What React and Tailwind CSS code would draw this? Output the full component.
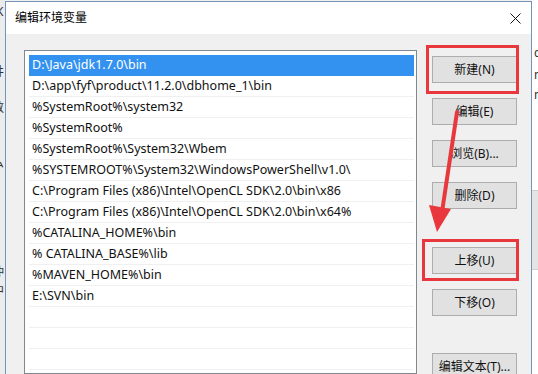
import React from 'react';

const paths = [
  'D:\\Java\\jdk1.7.0\\bin',
  'D:\\app\\fyf\\product\\11.2.0\\dbhome_1\\bin',
  '%SystemRoot%\\system32',
  '%SystemRoot%',
  '%SystemRoot%\\System32\\Wbem',
  '%SYSTEMROOT%\\System32\\WindowsPowerShell\\v1.0\\',
  'C:\\Program Files (x86)\\Intel\\OpenCL SDK\\2.0\\bin\\x86',
  'C:\\Program Files (x86)\\Intel\\OpenCL SDK\\2.0\\bin\\x64%',
  '%CATALINA_HOME%\\bin',
  '% CATALINA_BASE%\\lib',
  '%MAVEN_HOME%\\bin',
  'E:\\SVN\\bin',
  '', '', '', '',
];

const Btn = ({ children, className = '' }) => (
  <div
    className={`w-[85px] h-[27px] shrink-0 bg-[#e1e1e1] border border-[#adadad] flex items-center justify-center text-[12px] text-[#111] ${className}`}
  >
    {children}
  </div>
);

export default function App() {
  return (
    <div
      className="w-[538px] h-[374px] overflow-hidden relative bg-[#f2f2f2] flex"
      style={{ fontFamily: '"Noto Sans", "Noto Sans CJK SC", sans-serif' }}
    >
      {/* desktop behind, left */}
      <div className="w-[5px] h-full relative overflow-hidden bg-[#ececec] text-[12px] text-[#333] leading-none">
        <span className="absolute left-[-4px] top-[6px]">K</span>
        <span className="absolute left-[-8px] top-[66px]">井</span>
        <span className="absolute left-[-8px] top-[102px]">数</span>
        <span className="absolute left-[-8px] top-[157px]">ム</span>
        <span className="absolute left-[-8px] top-[266px]">仲</span>
        <span className="absolute left-[-8px] top-[285px]">中</span>
      </div>

      {/* dialog */}
      <div className="w-[527px] h-[373px] mt-[1px] border-x border-t border-[#7592b8] flex flex-col bg-[#f0f0f0] overflow-hidden">
        <div className="h-[32px] shrink-0 bg-white flex items-center justify-between pl-[9px] pr-[9px]">
          <span className="text-[12px] text-[#000]">编辑环境变量</span>
          <svg width="11" height="11" viewBox="0 0 11 11" className="mr-[1px]">
            <path d="M0.5 0.5 L10.5 10.5 M10.5 0.5 L0.5 10.5" stroke="#111" strokeWidth="1" />
          </svg>
        </div>
        <div className="flex-1 min-h-0 flex pl-[18px] pt-[16px]">
          <div className="w-[393px] shrink-0 border border-[#828790] bg-white pt-[4px] pl-[4px] pr-[2px] text-[12.5px]">
            {paths.map((p, i) => (
              <div
                key={i}
                className={`h-[21px] pl-[3px] flex items-center whitespace-nowrap border-b ${
                  i === 0 ? 'bg-[#3392f0] text-white border-[#3392f0]' : 'text-[#111] border-[#f0f0f0]'
                }`}
              >
                {p}
              </div>
            ))}
          </div>
          <div className="ml-[15px] pt-[6px] flex flex-col">
            <Btn>新建(N)</Btn>
            <Btn className="mt-[15px]">编辑(E)</Btn>
            <Btn className="mt-[15px]">浏览(B)...</Btn>
            <Btn className="mt-[15px]">删除(D)</Btn>
            <Btn className="mt-[38px]">上移(U)</Btn>
            <Btn className="mt-[15px]">下移(O)</Btn>
            <Btn className="mt-[37px]">编辑文本(T)...</Btn>
          </div>
        </div>
      </div>

      {/* desktop behind, right */}
      <div className="flex-1 relative overflow-hidden bg-white text-[12px] text-[#333] leading-none">
        <span className="absolute left-[2px] top-[47px]">c</span>
        <span className="absolute left-[2px] top-[69px]">m</span>
        <span className="absolute left-[2px] top-[89px]">m</span>
        <div className="absolute left-0 right-0 top-[190px] h-[80px] bg-[#e4e4e4] border-y border-[#cfcfcf]" />
      </div>

      {/* annotations */}
      <div className="absolute left-[426px] top-[45px] w-[93px] h-[49px] border-[3px] border-[#e8383d]" />
      <div className="absolute left-[422px] top-[239px] w-[97px] h-[42px] border-[3px] border-[#e8383d]" />
      <svg className="absolute left-0 top-0" width="538" height="374">
        <path d="M457 112 L442 212" stroke="#e8383d" strokeWidth="4" strokeLinecap="round" />
        <path d="M429 205 L451 209 L437 232 Z" fill="#e8383d" />
      </svg>
    </div>
  );
}
